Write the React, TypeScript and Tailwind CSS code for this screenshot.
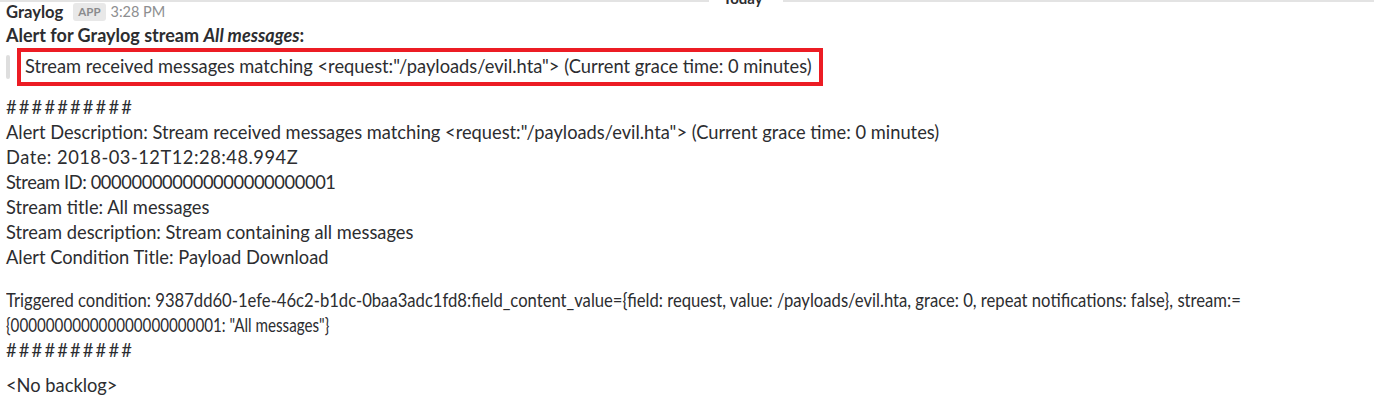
import React from 'react';

const lines: { text: string; track: string }[] = [
  {
    text: 'Alert Description: Stream received messages matching <request:"/payloads/evil.hta"> (Current grace time: 0 minutes)',
    track: 'tracking-[0px]',
  },
  { text: 'Date: 2018-03-12T12:28:48.994Z', track: 'tracking-[0.5px]' },
  { text: 'Stream ID: 000000000000000000000001', track: 'tracking-[-0.4px]' },
  { text: 'Stream title: All messages', track: 'tracking-[0px]' },
  { text: 'Stream description: Stream containing all messages', track: 'tracking-[0px]' },
  { text: 'Alert Condition Title: Payload Download', track: 'tracking-[0px]' },
];

const App: React.FC = () => {
  return (
    <div className="relative w-[1374px] h-[400px] overflow-hidden bg-white text-[#2c2d30] font-['Lato','Liberation_Sans',sans-serif] text-[18.3px]">
      {/* Day divider */}
      <div className="absolute top-0 left-0 right-0 h-[2px] flex">
        <div className="w-[709px] h-[2px] bg-[#e3e3e3]" />
        <div className="w-[74px]" />
        <div className="flex-1 h-[2px] bg-[#e3e3e3]" />
      </div>
      <div className="absolute top-[-12px] left-[723px] text-[15px] font-bold leading-[20px] text-[#2c2d30]">
        Today
      </div>

      <div className="pl-[6px] pt-[1px]">
        <div className="flex items-center h-[22px]">
          <span className="font-bold text-[16.6px]">Graylog</span>
          <span className="ml-[10px] bg-[#e8e8e8] text-[#8a8b8d] text-[11.5px] font-bold rounded-[3px] px-[5px] h-[18px] leading-[18px]">
            APP
          </span>
          <span className="ml-[5px] text-[#8d8e90] text-[14.5px]">3:28 PM</span>
        </div>
        <div className="h-[24px] leading-[24px] font-bold text-[18px]">
          Alert for Graylog stream <i>All messages</i>:
        </div>

        <div className="flex items-center mt-[1px]">
          <div className="w-[4px] h-[24px] rounded-[2px] bg-[#dedede]" />
          <div className="ml-[7px] border-[4px] border-[#ec1c24] w-[806px] h-[38px] pl-[4px] leading-[29px] whitespace-nowrap">
            Stream received messages matching &lt;request:"/payloads/evil.hta"&gt; (Current grace time: 0 minutes)
          </div>
        </div>

        <div className="mt-[9px] leading-[25px]">
          <div className="tracking-[2.2px]">##########</div>
          {lines.map((l, i) => (
            <div key={i} className={l.track}>
              {l.text}
            </div>
          ))}
        </div>

        <div className="mt-[18px] leading-[25px] whitespace-nowrap">
          <div className="origin-left scale-x-[0.91]">
            Triggered condition: 9387dd60-1efe-46c2-b1dc-0baa3adc1fd8:field_content_value={'{'}field: request, value: /payloads/evil.hta, grace: 0, repeat notifications: false{'}'}, stream:=
          </div>
          <div className="origin-left scale-x-[0.83]">{'{'}000000000000000000000001: "All messages"{'}'}</div>
          <div className="tracking-[2.2px]">##########</div>
        </div>

        <div className="mt-[10px] leading-[25px]">&lt;No backlog&gt;</div>
      </div>
    </div>
  );
};

export default App;
